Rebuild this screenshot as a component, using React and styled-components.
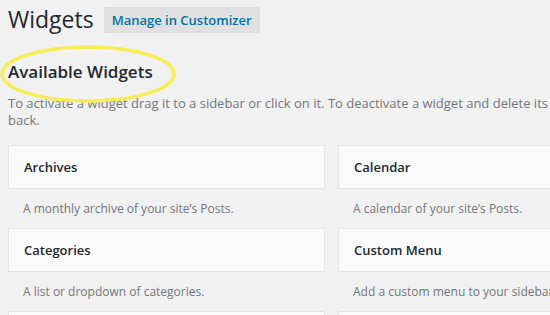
import styled, { createGlobalStyle } from 'styled-components';

const widgets = [
  { name: 'Archives', description: 'A monthly archive of your site’s Posts.' },
  { name: 'Calendar', description: 'A calendar of your site’s Posts.' },
  { name: 'Categories', description: 'A list or dropdown of categories.' },
  { name: 'Custom Menu', description: 'Add a custom menu to your sidebar.' },
  { name: 'Meta', description: 'Login, RSS, & WordPress.org links.' },
  { name: 'Pages', description: 'A list of your site’s Pages.' },
];

export default function App() {
  return (
    <>
      <GlobalStyle />
      <Wrap>
        <TitleRow>
          <Title>Widgets</Title>
          <ManageButton href="#">Manage in Customizer</ManageButton>
        </TitleRow>
        <HeadingBlock>
          <Heading>Available Widgets</Heading>
          {/* hand-drawn highlight around the heading */}
          <Highlight width="182" height="62" viewBox="0 0 182 62">
            <ellipse cx="88" cy="30" rx="86" ry="27" fill="none" stroke="#f7ee55" strokeWidth="3.5" />
          </Highlight>
        </HeadingBlock>
        <Intro>
          To activate a widget drag it to a sidebar or click on it. To deactivate a widget and delete its
          settings, drag it back.
        </Intro>
        <WidgetGrid>
          {widgets.map((widget) => (
            <WidgetItem key={widget.name}>
              <WidgetTop>{widget.name}</WidgetTop>
              <WidgetDescription>{widget.description}</WidgetDescription>
            </WidgetItem>
          ))}
        </WidgetGrid>
      </Wrap>
    </>
  );
}

const GlobalStyle = createGlobalStyle`
  body {
    margin: 0;
    background: #f1f1f1;
    overflow: hidden;
    font-family: "Open Sans", "Noto Sans", sans-serif;
    color: #23282d;
  }
`;

const Wrap = styled.div`
  width: 668px;
  padding: 5px 0 0 8px;
`;

const TitleRow = styled.div`
  display: flex;
  align-items: center;
  gap: 10px;
`;

const Title = styled.h1`
  margin: 0;
  font-size: 23px;
  font-weight: 400;
  line-height: 29px;
`;

const ManageButton = styled.a`
  display: inline-block;
  padding: 4px 8px;
  background: #e0e0e0;
  border-radius: 2px;
  color: #0073aa;
  font-size: 13px;
  font-weight: 600;
  line-height: 18px;
  text-decoration: none;
`;

const HeadingBlock = styled.div`
  position: relative;
  margin-top: 27px;
`;

const Heading = styled.h2`
  margin: 0;
  font-size: 17px;
  font-weight: 600;
  line-height: 22px;
`;

const Highlight = styled.svg`
  position: absolute;
  left: -8px;
  top: -17px;
  pointer-events: none;
`;

const Intro = styled.p`
  margin: 12px 0 0;
  color: #72777c;
  font-size: 13px;
  line-height: 17px;
`;

const WidgetGrid = styled.div`
  display: grid;
  grid-template-columns: 317px 317px;
  column-gap: 13px;
  margin-top: 16px;
`;

const WidgetItem = styled.div`
  display: flex;
  flex-direction: column;
`;

const WidgetTop = styled.div`
  height: 42px;
  padding: 0 15px;
  display: flex;
  align-items: center;
  background: #fafafa;
  border: 1px solid #e5e5e5;
  font-size: 13px;
  font-weight: 600;
`;

const WidgetDescription = styled.div`
  height: 39px;
  padding: 11px 15px 0;
  box-sizing: border-box;
  color: #72777c;
  font-size: 12px;
  line-height: 18px;
`;
